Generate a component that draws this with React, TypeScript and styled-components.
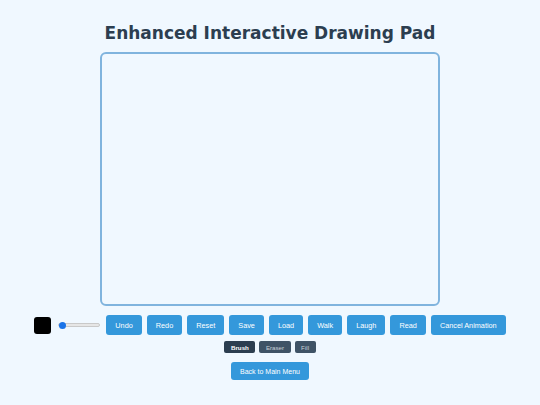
import React from "react";
import styled, { createGlobalStyle } from "styled-components";

const Global = createGlobalStyle`
  html, body { margin: 0; padding: 0; background: #f0f8ff; }
  body { font-family: "Liberation Sans", Arial, sans-serif; }
`;

const Page = styled.div`
  width: 540px;
  height: 405px;
  display: flex;
  flex-direction: column;
  align-items: center;
  padding-top: 21px;
  box-sizing: border-box;
`;

const Title = styled.h1`
  margin: 0 0 7px;
  font-family: "DejaVu Sans", Verdana, sans-serif;
  font-weight: bold;
  font-size: 17px;
  line-height: 24px;
  color: #2c3e50;
`;

const Canvas = styled.div`
  width: 340px;
  height: 254px;
  box-sizing: border-box;
  border: 2px solid #80b4de;
  border-radius: 6px;
  background: #f0f8ff;
`;

const Controls = styled.div`
  display: flex;
  align-items: center;
  gap: 5px;
  margin-top: 9px;
`;

const ColorSwatch = styled.div`
  width: 17px;
  height: 17px;
  border-radius: 3px;
  background: #000;
  margin-right: 2px;
`;

const Slider = styled.div`
  position: relative;
  width: 42px;
  height: 4px;
  margin-right: 1px;
  border-radius: 2px;
  background: #e6e6e6;
  border: 1px solid #c9c9c9;
  box-sizing: border-box;
`;

const Thumb = styled.div`
  position: absolute;
  left: 0;
  top: 50%;
  width: 7px;
  height: 7px;
  margin-top: -3.5px;
  border-radius: 50%;
  background: #1a73e8;
`;

const Button = styled.button`
  height: 20px;
  padding: 0 9px;
  border: none;
  border-radius: 3px;
  background: #3498db;
  color: #fff;
  font-family: "Liberation Sans", Arial, sans-serif;
  font-size: 7.3px;
  cursor: pointer;
`;

const ToolRow = styled.div`
  display: flex;
  gap: 4px;
  margin-top: 6px;
`;

const ToolButton = styled.button<{ $active?: boolean }>`
  height: 12px;
  padding: 0 6.5px;
  border: none;
  border-radius: 2px;
  background: ${(p) => (p.$active ? "#2c3e50" : "#3f5366")};
  color: ${(p) => (p.$active ? "#fff" : "#c8d0d8")};
  font-family: "Liberation Sans", Arial, sans-serif;
  font-size: 6.2px;
  font-weight: ${(p) => (p.$active ? "bold" : "normal")};
`;

const BackButton = styled(Button)`
  height: 18px;
  margin-top: 9px;
  padding: 0 9.5px;
  font-size: 7px;
`;

const actions = ["Undo", "Redo", "Reset", "Save", "Load", "Walk", "Laugh", "Read", "Cancel Animation"];

export default function App() {
  return (
    <>
      <Global />
      <Page>
        <Title>Enhanced Interactive Drawing Pad</Title>
        <Canvas />
        <Controls>
          <ColorSwatch />
          <Slider>
            <Thumb />
          </Slider>
          {actions.map((a) => (
            <Button key={a}>{a}</Button>
          ))}
        </Controls>
        <ToolRow>
          <ToolButton $active>Brush</ToolButton>
          <ToolButton>Eraser</ToolButton>
          <ToolButton>Fill</ToolButton>
        </ToolRow>
        <BackButton>Back to Main Menu</BackButton>
      </Page>
    </>
  );
}
